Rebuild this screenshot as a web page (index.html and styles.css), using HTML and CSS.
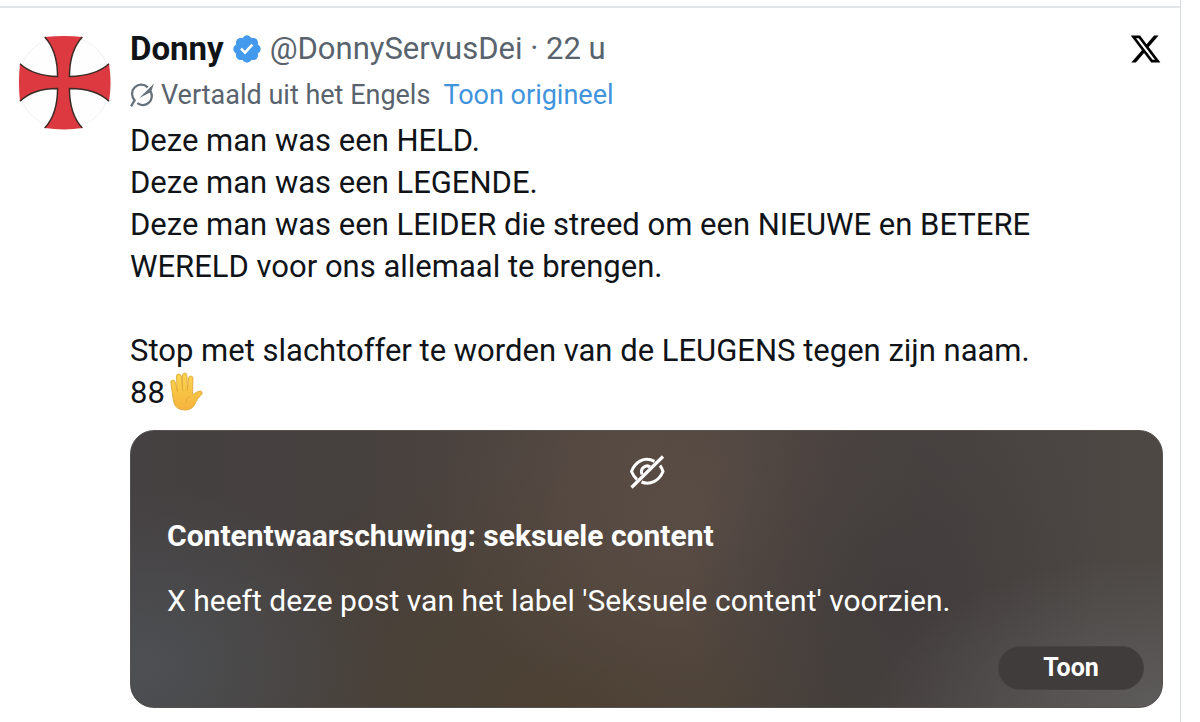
FILE: index.html
```html
<!DOCTYPE html>
<html lang="nl">
<head>
<meta charset="utf-8">
<meta name="viewport" content="width=device-width, initial-scale=1">
<title>Post</title>
<link rel="stylesheet" href="styles.css">
</head>
<body>
<main class="timeline">
  <article class="post">
    <svg class="avatar" viewBox="0 0 96 96" aria-hidden="true">
      <circle cx="48" cy="48" r="47" fill="#fefefe" stroke="#f0f0f0"/>
      <path d="M28 2Q48 0 66 2Q53 16 53 42Q80 41 93 29Q96 48 93 67Q80 54 53 54Q53 80 66 94Q48 97 28 94Q41 80 41 54Q16 54 3 67Q1 48 3 29Q16 41 41 42Q41 16 28 2Z" fill="#dc3a40"/>
      <path d="M66 2Q53 16 53 42Q80 41 93 29M93 67Q80 54 53 54Q53 80 66 94M28 94Q41 80 41 54Q16 54 3 67M3 29Q16 41 41 42Q41 16 28 2" fill="none" stroke="#3d2a26" stroke-width="1.500"/>
    </svg>
    <div class="content">
      <header class="head">
        <div class="byline">
          <strong class="name">Donny</strong>
          <svg class="verified" viewBox="0 0 22 22" aria-label="Geverifieerd" role="img"><path fill="#439aec" d="M20.396 11c-.018-.646-.215-1.275-.57-1.816-.354-.54-.852-.972-1.438-1.246.223-.607.27-1.264.14-1.897-.131-.634-.437-1.218-.882-1.687-.47-.445-1.053-.75-1.687-.882-.633-.13-1.29-.083-1.897.14-.273-.587-.704-1.086-1.245-1.44S11.647 1.62 11 1.604c-.646.017-1.273.213-1.813.568s-.969.854-1.24 1.44c-.608-.223-1.267-.272-1.902-.14-.635.13-1.22.436-1.69.882-.445.47-.749 1.055-.878 1.688-.13.633-.08 1.29.144 1.896-.587.274-1.087.705-1.443 1.245-.356.54-.555 1.17-.574 1.817.02.647.218 1.276.574 1.817.356.54.856.972 1.443 1.245-.224.606-.274 1.263-.144 1.896.13.634.433 1.218.877 1.688.47.443 1.054.747 1.687.878.633.132 1.29.084 1.897-.136.274.586.705 1.084 1.246 1.439.54.354 1.17.551 1.816.569.647-.016 1.276-.213 1.817-.567s.972-.854 1.245-1.44c.604.239 1.266.296 1.903.164.636-.132 1.22-.447 1.68-.907.46-.46.776-1.044.908-1.681s.075-1.299-.165-1.903c.586-.274 1.084-.705 1.439-1.246.354-.54.551-1.17.569-1.816z"/><path fill="#fff" d="M9.662 14.85l-3.429-3.428 1.293-1.302 2.072 2.072 4.4-4.794 1.347 1.246z"/></svg>
          <span class="handle">@DonnyServusDei · 22 u</span>
        </div>
        <svg class="xlogo" viewBox="0 0 24 24" role="img" aria-label="X"><path d="M18.244 2.25h3.308l-7.227 8.26 8.502 11.24H16.17l-5.214-6.817L4.99 21.75H1.68l7.73-8.835L1.254 2.25H8.08l4.713 6.231zm-1.161 17.52h1.833L7.084 4.126H5.117z"/></svg>
      </header>
      <div class="translation">
        <svg class="grok" viewBox="0 0 24 24" aria-hidden="true" fill="none" stroke="#66717b" stroke-width="2.200"><path d="M17 4.200A8.700 8.700 0 0 0 4.500 16.500L1 22.500M19.600 7.800A8.700 8.700 0 0 1 7 19.400"/><path d="M23 .5L9 14.500L20.200 8.600Z" fill="#66717b" stroke="none"/></svg>
        <span>Vertaald uit het Engels</span>
        <a class="original" href="#">Toon origineel</a>
      </div>
      <p class="text">Deze man was een HELD.<br>Deze man was een LEGENDE.<br>Deze man was een LEIDER die streed om een NIEUWE en BETERE WERELD voor ons allemaal te brengen.</p>
      <p class="text last">Stop met slachtoffer te worden van de LEUGENS tegen zijn naam.<br>88<svg class="hand" viewBox="0 0 34 40" role="img" aria-label="Opgestoken hand"><defs><linearGradient id="skin" x1="0" y1="0" x2="0" y2="1"><stop offset="0" stop-color="#fbd64f"/><stop offset="1" stop-color="#f4b33c"/></linearGradient></defs><path d="M4 26L2 12Q1 8 4 8Q6 8 6.500 11L8 18L7.500 5Q7 2 10 2Q12 2 12.500 5L13.500 17L13.500 3Q14 1 16 1Q18 1 18 4L18.500 17L19.500 6Q20 4 22 4Q24 4 24 7L23.500 23Q26 21 28 20Q32 18 33 20Q34 22 31 24Q28 27 26 32Q23 38 16 38Q7 38 5 31Z" fill="url(#skin)" stroke="#dda136" stroke-width=".8"/><path d="M8 18L8.500 20M13.500 16V19M18.500 16L18 19M21 24Q17 26 17 31" fill="none" stroke="#dfa235" stroke-width=".8"/></svg></p>
      <section class="warning" aria-labelledby="warning-title">
        <svg class="eye" viewBox="0 0 36 36" aria-hidden="true" fill="none" stroke="#fff" stroke-width="3"><path d="M25.500 7.300C15 2 6 8 2.500 17.500C4 21 5.500 23.500 8 25.500M31 11.500Q33 14 34 17.500C30 27 21 31.500 12.500 28"/><path d="M13 20.500C10.500 14 17.500 10 21 13"/><path d="M34 2.500L2.500 33.500" stroke-width="3.200"/></svg>
        <h2 class="title" id="warning-title">Contentwaarschuwing: seksuele content</h2>
        <p class="reason">X heeft deze post van het label 'Seksuele content' voorzien.</p>
        <button class="show" type="button">Toon</button>
      </section>
    </div>
  </article>
</main>
</body>
</html>
```
FILE: styles.css
```css
* { box-sizing: border-box; }
body {
  margin: 0;
  background: #fff;
  color: #101418;
  font-family: Roboto, "Noto Sans", sans-serif;
  font-size: 31px;
  line-height: 42px;
}
h2, p { margin: 0; }
.timeline {
  min-height: 100vh;
  margin-right: 19px;
  padding-top: 6px;
  border-right: 1px solid #d5dade;
}
.post {
  display: flex;
  gap: 18px;
  padding: 20px 17px 13px;
  border-top: 2px solid #e3e6e8;
}
.avatar { flex: none; width: 95px; height: 95px; margin-top: 7px; }
.content { flex: 1; min-width: 0; }
.head { display: flex; justify-content: space-between; align-items: center; height: 42px; }
.byline { display: flex; align-items: center; }
.name { font-size: 33px; font-weight: 700; }
.verified { width: 32px; height: 32px; margin: 0 7px; }
.handle { color: #59636d; }
.xlogo { width: 33px; height: 36px; margin-right: 1px; }
.translation { display: flex; align-items: center; height: 50px; color: #59636d; font-size: 27px; }
.grok { width: 25px; height: 25px; margin-right: 6px; }
.original { margin-left: 13px; color: #3f94dc; text-decoration: none; }
.text { padding-right: 40px; }
.text + .text { margin-top: 42px; }
.hand { width: 34px; height: 40px; margin-left: 4px; vertical-align: -9px; }
.last { height: 84px; }
.warning {
  display: flex;
  flex-direction: column;
  margin-top: 16px;
  padding: 23px 36px 17px;
  border: 1px solid #555250;
  border-radius: 24px;
  color: #fff;
  background:
    radial-gradient(ellipse 28% 55% at 100% 100%, #5d5b5b, transparent),
    radial-gradient(ellipse 25% 65% at 0% 85%, #4d5053, transparent),
    radial-gradient(ellipse 20% 90% at 74% 60%, #423d3c, transparent),
    radial-gradient(ellipse 24% 80% at 54% 30%, #594c45, transparent),
    radial-gradient(ellipse 38% 90% at 42% 100%, #4b4032, transparent),
    linear-gradient(90deg, #454041, #46403e 22%, #54483f 50%, #474140 68%, #4d4844);
}
.eye { width: 36px; height: 36px; align-self: center; }
.title, .reason { font-size: 30px; line-height: 42px; }
.title { margin-top: 25px; font-weight: 700; }
.reason { margin-top: 23px; }
.show {
  align-self: flex-end;
  width: 146px;
  height: 44px;
  margin: 24px -18px 0 0;
  border: 1px solid #454241;
  border-radius: 22px;
  background: #3f3c3b;
  color: #fff;
  font: 700 25px/40px Roboto, "Noto Sans", sans-serif;
}
```
